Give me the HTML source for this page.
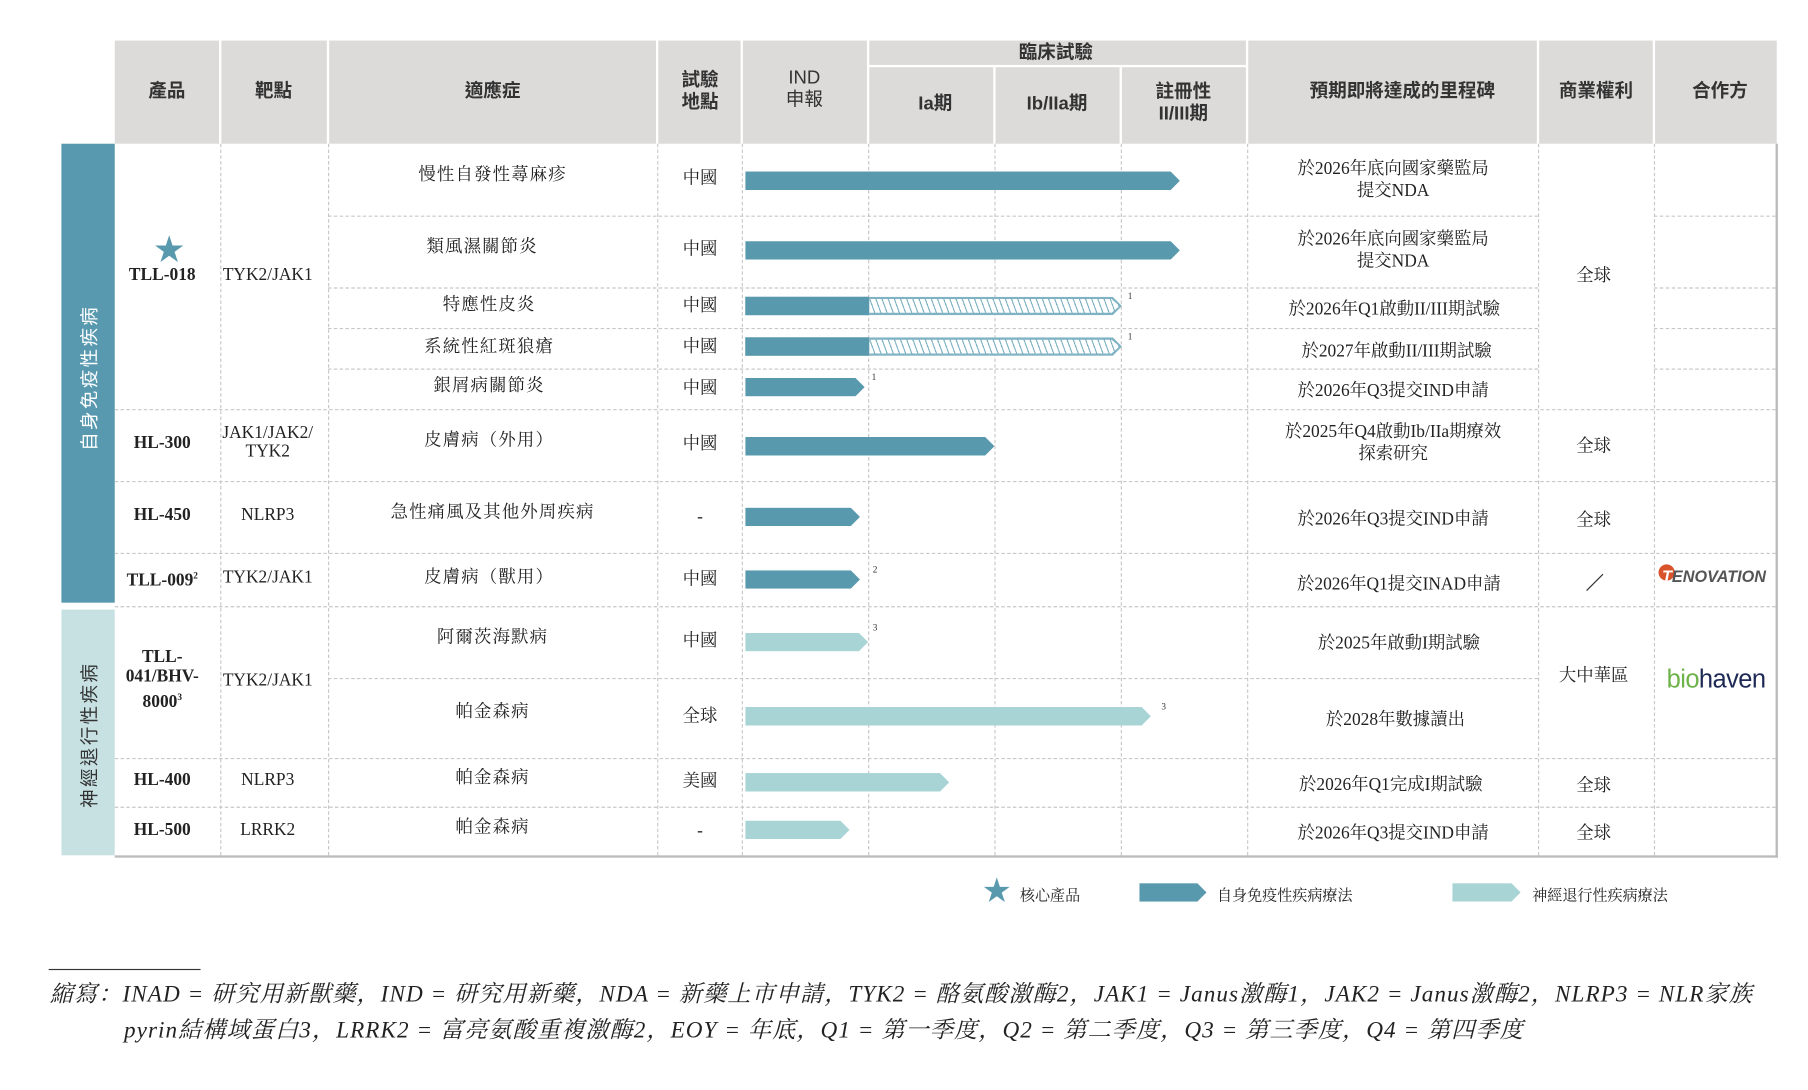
<!DOCTYPE html>
<html><head><meta charset="utf-8"><style>
html,body{margin:0;padding:0;background:#fff;}
body{width:1808px;height:1090px;overflow:hidden;position:relative;}
#w{position:absolute;left:0;top:0;width:1560px;height:940px;transform:scale(1.159);transform-origin:0 0;font-family:"Liberation Serif","Noto Serif CJK SC",serif;color:#222;}
.a{position:absolute;}
.t{position:absolute;transform:translate(-50%,-50%);white-space:nowrap;text-align:center;font-size:15px;line-height:19px;}
.h{position:absolute;background:#dcdbda;}
.hd{position:absolute;transform:translate(-50%,-50%);white-space:nowrap;text-align:center;font-family:"Liberation Sans","Noto Sans CJK TC",sans-serif;font-weight:bold;font-size:16px;line-height:19px;color:#333;}
.b{font-weight:bold;}
.vl{position:absolute;top:124px;height:614px;border-left:1px dashed #c8c8c8;width:0;}
.hl{position:absolute;height:0;border-top:1px dashed #c8c8c8;}
.bar{position:absolute;height:16px;clip-path:polygon(0 0,calc(100% - 8px) 0,100% 50%,calc(100% - 8px) 100%,0 100%);}
.d{background:#5899ae;}
.l{background:#a9d4d6;}
.hat{position:absolute;height:16px;background:#7fb3c3;clip-path:polygon(0 0,calc(100% - 8px) 0,100% 50%,calc(100% - 8px) 100%,0 100%);}
.hat i{position:absolute;left:0;top:2px;right:2px;bottom:2px;background:repeating-linear-gradient(70deg,#fff 0 4px,#7fb3c3 4px 5px);clip-path:polygon(0 0,calc(100% - 7px) 0,100% 50%,calc(100% - 7px) 100%,0 100%);}
.sup{position:absolute;font-size:8px;color:#333;}
.fn{position:absolute;font-size:20px;font-style:italic;line-height:32px;white-space:nowrap;letter-spacing:0.9px;}
</style></head><body><div id="w">

<div class="h" style="left:99px;top:35px;width:90px;height:89px"></div>
<div class="h" style="left:191px;top:35px;width:91px;height:89px"></div>
<div class="h" style="left:284px;top:35px;width:282px;height:89px"></div>
<div class="h" style="left:568px;top:35px;width:71px;height:89px"></div>
<div class="h" style="left:641px;top:35px;width:107px;height:89px"></div>
<div class="h" style="left:750px;top:35px;width:325px;height:21px"></div>
<div class="h" style="left:750px;top:58px;width:107px;height:66px"></div>
<div class="h" style="left:859px;top:58px;width:107px;height:66px"></div>
<div class="h" style="left:968px;top:58px;width:107px;height:66px"></div>
<div class="h" style="left:1077px;top:35px;width:249px;height:89px"></div>
<div class="h" style="left:1328px;top:35px;width:98px;height:89px"></div>
<div class="h" style="left:1428px;top:35px;width:105px;height:89px"></div>
<div class="hd" style="left:144px;top:79px">產品</div>
<div class="hd" style="left:236px;top:79px">靶點</div>
<div class="hd" style="left:425px;top:79px">適應症</div>
<div class="hd" style="left:604px;top:79px">試驗<br>地點</div>
<div class="hd" style="left:694px;top:77px;font-weight:normal">IND<br>申報</div>
<div class="hd" style="left:911px;top:46px">臨床試驗</div>
<div class="hd" style="left:807px;top:90px">Ia期</div>
<div class="hd" style="left:912px;top:90px">Ib/IIa期</div>
<div class="hd" style="left:1021px;top:89px">註冊性<br>II/III期</div>
<div class="hd" style="left:1210px;top:79px">預期即將達成的里程碑</div>
<div class="hd" style="left:1377px;top:79px">商業權利</div>
<div class="hd" style="left:1484px;top:79px">合作方</div>

<div class="a" style="left:53px;top:124px;width:46px;height:396px;background:#5899b0"></div>
<div class="a" style="left:53px;top:526px;width:46px;height:212px;background:#c7e1e3"></div>
<div class="a" style="left:76px;top:326px;transform:translate(-50%,-50%) rotate(-90deg);white-space:nowrap;color:#fff;font-family:'Liberation Sans','Noto Sans CJK TC',sans-serif;font-size:16px;letter-spacing:2px">自身免疫性疾病</div>
<div class="a" style="left:76px;top:634px;transform:translate(-50%,-50%) rotate(-90deg);white-space:nowrap;color:#333;font-family:'Liberation Sans','Noto Sans CJK TC',sans-serif;font-size:16px;letter-spacing:2px">神經退行性疾病</div>

<div class="vl" style="left:190px"></div>
<div class="vl" style="left:283px"></div>
<div class="vl" style="left:567px"></div>
<div class="vl" style="left:640px"></div>
<div class="vl" style="left:749px"></div>
<div class="vl" style="left:858px"></div>
<div class="vl" style="left:967px"></div>
<div class="vl" style="left:1076px"></div>
<div class="vl" style="left:1327px"></div>
<div class="vl" style="left:1427px"></div>
<div class="a" style="left:1532px;top:124px;width:2px;height:616px;background:#bbb"></div>
<div class="a" style="left:99px;top:738px;width:1435px;height:2px;background:#bbb"></div>
<div class="hl" style="left:283px;top:186px;width:1044px"></div><div class="hl" style="left:1427px;top:186px;width:105px"></div>
<div class="hl" style="left:283px;top:248px;width:1044px"></div><div class="hl" style="left:1427px;top:248px;width:105px"></div>
<div class="hl" style="left:283px;top:283px;width:1044px"></div><div class="hl" style="left:1427px;top:283px;width:105px"></div>
<div class="hl" style="left:283px;top:318px;width:1044px"></div><div class="hl" style="left:1427px;top:318px;width:105px"></div>
<div class="hl" style="left:99px;top:353px;width:1433px"></div>
<div class="hl" style="left:99px;top:415px;width:1433px"></div>
<div class="hl" style="left:99px;top:477px;width:1433px"></div>
<div class="hl" style="left:99px;top:523px;width:1433px"></div>
<div class="hl" style="left:283px;top:585px;width:1044px"></div>
<div class="hl" style="left:99px;top:654px;width:1433px"></div>
<div class="hl" style="left:99px;top:696px;width:1433px"></div>

<div class="t" style="left:146px;top:216px;color:#5899ae;font-size:26px">★</div>
<div class="t b" style="left:140px;top:238px">TLL-018</div>
<div class="t" style="left:231px;top:238px">TYK2/JAK1</div>
<div class="t b" style="left:140px;top:383px">HL-300</div>
<div class="t" style="left:231px;top:382px;line-height:16px">JAK1/JAK2/<br>TYK2</div>
<div class="t b" style="left:140px;top:445px">HL-450</div>
<div class="t" style="left:231px;top:445px">NLRP3</div>
<div class="t b" style="left:140px;top:499px">TLL-009<sup style="font-size:8px">2</sup></div>
<div class="t" style="left:231px;top:499px">TYK2/JAK1</div>
<div class="t b" style="left:140px;top:587px;line-height:17px">TLL-<br>041/BHV-<br>8000<sup style="font-size:8px">3</sup></div>
<div class="t" style="left:231px;top:588px">TYK2/JAK1</div>
<div class="t b" style="left:140px;top:674px">HL-400</div>
<div class="t" style="left:231px;top:674px">NLRP3</div>
<div class="t b" style="left:140px;top:717px">HL-500</div>
<div class="t" style="left:231px;top:717px">LRRK2</div>

<div class="t" style="left:425px;top:152px;letter-spacing:1px">慢性自發性蕁麻疹</div>
<div class="t" style="left:416px;top:214px;letter-spacing:1px">類風濕關節炎</div>
<div class="t" style="left:422px;top:264px;letter-spacing:1px">特應性皮炎</div>
<div class="t" style="left:422px;top:300px;letter-spacing:1px">系統性紅斑狼瘡</div>
<div class="t" style="left:422px;top:334px;letter-spacing:1px">銀屑病關節炎</div>
<div class="t" style="left:422px;top:381px;letter-spacing:1px">皮膚病（外用）</div>
<div class="t" style="left:425px;top:443px;letter-spacing:1px">急性痛風及其他外周疾病</div>
<div class="t" style="left:422px;top:499px;letter-spacing:1px">皮膚病（獸用）</div>
<div class="t" style="left:425px;top:551px;letter-spacing:1px">阿爾茨海默病</div>
<div class="t" style="left:425px;top:615px;letter-spacing:1px">帕金森病</div>
<div class="t" style="left:425px;top:672px;letter-spacing:1px">帕金森病</div>
<div class="t" style="left:425px;top:715px;letter-spacing:1px">帕金森病</div>

<div class="t" style="left:604px;top:155px">中國</div>
<div class="t" style="left:604px;top:216px">中國</div>
<div class="t" style="left:604px;top:265px">中國</div>
<div class="t" style="left:604px;top:300px">中國</div>
<div class="t" style="left:604px;top:336px">中國</div>
<div class="t" style="left:604px;top:384px">中國</div>
<div class="t" style="left:604px;top:447px">-</div>
<div class="t" style="left:604px;top:501px">中國</div>
<div class="t" style="left:604px;top:554px">中國</div>
<div class="t" style="left:604px;top:619px">全球</div>
<div class="t" style="left:604px;top:675px">美國</div>
<div class="t" style="left:604px;top:718px">-</div>

<div class="bar d" style="left:643px;top:148px;width:375px"></div>
<div class="bar d" style="left:643px;top:208px;width:375px"></div>
<div class="a d" style="left:643px;top:256px;width:107px;height:16px"></div>
<div class="hat" style="left:750px;top:256px;width:218px"><i></i></div>
<div class="sup" style="left:973px;top:251px">1</div>
<div class="a d" style="left:643px;top:291px;width:107px;height:16px"></div>
<div class="hat" style="left:750px;top:291px;width:218px"><i></i></div>
<div class="sup" style="left:973px;top:286px">1</div>
<div class="bar d" style="left:643px;top:326px;width:103px"></div>
<div class="sup" style="left:752px;top:321px">1</div>
<div class="bar d" style="left:643px;top:377px;width:215px"></div>
<div class="bar d" style="left:643px;top:438px;width:99px"></div>
<div class="bar d" style="left:643px;top:492px;width:99px"></div>
<div class="sup" style="left:753px;top:487px">2</div>
<div class="bar l" style="left:643px;top:546px;width:106px"></div>
<div class="sup" style="left:753px;top:537px">3</div>
<div class="bar l" style="left:643px;top:610px;width:350px"></div>
<div class="sup" style="left:1002px;top:605px">3</div>
<div class="bar l" style="left:643px;top:667px;width:176px"></div>
<div class="bar l" style="left:643px;top:708px;width:90px"></div>

<div class="t" style="left:1202px;top:156px">於2026年底向國家藥監局<br>提交NDA</div>
<div class="t" style="left:1202px;top:217px">於2026年底向國家藥監局<br>提交NDA</div>
<div class="t" style="left:1203px;top:268px">於2026年Q1啟動II/III期試驗</div>
<div class="t" style="left:1205px;top:304px">於2027年啟動II/III期試驗</div>
<div class="t" style="left:1202px;top:338px">於2026年Q3提交IND申請</div>
<div class="t" style="left:1202px;top:383px">於2025年Q4啟動Ib/IIa期療效<br>探索研究</div>
<div class="t" style="left:1202px;top:449px">於2026年Q3提交IND申請</div>
<div class="t" style="left:1207px;top:505px">於2026年Q1提交INAD申請</div>
<div class="t" style="left:1207px;top:556px">於2025年啟動I期試驗</div>
<div class="t" style="left:1204px;top:622px">於2028年數據讀出</div>
<div class="t" style="left:1200px;top:678px">於2026年Q1完成I期試驗</div>
<div class="t" style="left:1202px;top:720px">於2026年Q3提交IND申請</div>

<div class="t" style="left:1375px;top:239px">全球</div>
<div class="t" style="left:1375px;top:386px">全球</div>
<div class="t" style="left:1375px;top:450px">全球</div>
<div class="a" style="left:1366px;top:502px;width:20px;height:1px;background:#333;transform:rotate(-45deg)"></div>
<div class="t" style="left:1375px;top:584px">大中華區</div>
<div class="t" style="left:1375px;top:679px">全球</div>
<div class="t" style="left:1375px;top:720px">全球</div>

<div class="a" style="left:1431px;top:487px;width:14px;height:14px;border-radius:50%;background:#d9532a"></div>
<div class="a" style="left:1436px;top:487px;font-family:'Liberation Sans',sans-serif;font-weight:bold;font-style:italic;font-size:14px;color:#555;line-height:20px;"><span style="color:#fff;margin-left:-2px">T</span>ENOVATION</div>
<div class="a" style="left:1438px;top:572px;font-family:'Liberation Sans',sans-serif;font-size:22px;line-height:28px;letter-spacing:-0.5px"><span style="color:#6db34a">bio</span><span style="color:#1e2a55">haven</span></div>

<div class="t" style="left:860px;top:770px;color:#5899ae;font-size:24px">★</div>
<div class="a" style="left:880px;top:762px;font-size:13px">核心產品</div>
<div class="bar d" style="left:983px;top:762px;width:58px"></div>
<div class="a" style="left:1050px;top:762px;font-size:13px">自身免疫性疾病療法</div>
<div class="bar l" style="left:1253px;top:762px;width:59px"></div>
<div class="a" style="left:1322px;top:762px;font-size:13px">神經退行性疾病療法</div>

<div class="a" style="left:42px;top:836px;width:131px;height:1px;background:#333"></div>
<div class="fn" style="left:43px;top:842px">縮寫：INAD = 研究用新獸藥，IND = 研究用新藥，NDA = 新藥上市申請，TYK2 = 酪氨酸激酶2，JAK1 = Janus激酶1，JAK2 = Janus激酶2，NLRP3 = NLR家族</div>
<div class="fn" style="left:107px;top:873px">pyrin結構域蛋白3，LRRK2 = 富亮氨酸重複激酶2，EOY = 年底，Q1 = 第一季度，Q2 = 第二季度，Q3 = 第三季度，Q4 = 第四季度</div>

</div></body></html>
